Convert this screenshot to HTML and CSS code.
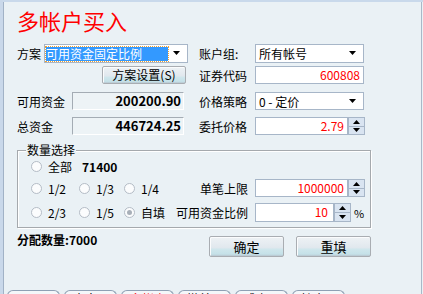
FILE: index.html
```html
<!DOCTYPE html>
<html lang="zh-CN">
<head>
<meta charset="utf-8">
<title>多帐户买入</title>
<link rel="stylesheet" href="styles.css">
</head>
<body>
<div class="win">
  <div class="panel">
    <h1 class="title">多帐户买入</h1>

    <div class="row r1">
      <div class="lcol">
        <span class="lbl l-plan">方案</span>
        <div class="combo c-plan">
          <span class="sel">可用资金固定比例</span>
          <svg class="arr" width="8" height="5" viewBox="0 0 8 5"><path d="M0 0h7l-3.5 4z" fill="#000"/></svg>
        </div>
      </div>
      <div class="rcol">
        <span class="lbl rlbl">账户组:</span>
        <div class="combo c-r">
          <span class="ctext">所有帐号</span>
          <svg class="arr" width="8" height="5" viewBox="0 0 8 5"><path d="M0 0h7l-3.5 4z" fill="#000"/></svg>
        </div>
      </div>
    </div>

    <div class="row r2">
      <div class="lcol">
        <button class="btn b-plan">方案设置(S)</button>
      </div>
      <div class="rcol">
        <span class="lbl rlbl">证券代码</span>
        <div class="inp w-full red">600808</div>
      </div>
    </div>

    <div class="row r3">
      <div class="lcol">
        <span class="lbl l-money">可用资金</span>
        <div class="ro">200200.90</div>
      </div>
      <div class="rcol">
        <span class="lbl rlbl">价格策略</span>
        <div class="combo c-r">
          <span class="ctext">0 - 定价</span>
          <svg class="arr" width="8" height="5" viewBox="0 0 8 5"><path d="M0 0h7l-3.5 4z" fill="#000"/></svg>
        </div>
      </div>
    </div>

    <div class="row r4">
      <div class="lcol">
        <span class="lbl l-money">总资金</span>
        <div class="ro">446724.25</div>
      </div>
      <div class="rcol">
        <span class="lbl rlbl">委托价格</span>
        <div class="inp w-spin red">2.79</div>
        <div class="spin">
          <i><svg width="7" height="4" viewBox="0 0 7 4"><path d="M3.5 0l3.5 4h-7z" fill="#000"/></svg></i>
          <i><svg width="7" height="4" viewBox="0 0 7 4"><path d="M0 0h7l-3.5 4z" fill="#000"/></svg></i>
        </div>
      </div>
    </div>

    <div class="group">
      <span class="legend">数量选择</span>
      <div class="grow ga">
        <div class="opts">
          <span class="opt"><span class="radio"></span>全部</span>
          <b class="all">71400</b>
        </div>
      </div>
      <div class="grow gb">
        <div class="opts">
          <span class="opt o1"><span class="radio"></span>1/2</span>
          <span class="opt o2"><span class="radio"></span>1/3</span>
          <span class="opt"><span class="radio"></span>1/4</span>
        </div>
        <span class="glbl">单笔上限</span>
        <div class="inp w-spin red">1000000</div>
        <div class="spin">
          <i><svg width="7" height="4" viewBox="0 0 7 4"><path d="M3.5 0l3.5 4h-7z" fill="#000"/></svg></i>
          <i><svg width="7" height="4" viewBox="0 0 7 4"><path d="M0 0h7l-3.5 4z" fill="#000"/></svg></i>
        </div>
      </div>
      <div class="grow gc">
        <div class="opts">
          <span class="opt o1"><span class="radio"></span>2/3</span>
          <span class="opt o2"><span class="radio"></span>1/5</span>
          <span class="opt"><span class="radio on"></span>自填</span>
        </div>
        <span class="glbl">可用资金比例</span>
        <div class="inp w-pct red">10</div>
        <div class="spin">
          <i><svg width="7" height="4" viewBox="0 0 7 4"><path d="M3.5 0l3.5 4h-7z" fill="#000"/></svg></i>
          <i><svg width="7" height="4" viewBox="0 0 7 4"><path d="M0 0h7l-3.5 4z" fill="#000"/></svg></i>
        </div>
        <span class="pct">%</span>
      </div>
    </div>

    <div class="foot">
      <b class="alloc">分配数量:7000</b>
      <div class="btns">
        <button class="btn b-act">确定</button>
        <button class="btn b-act">重填</button>
      </div>
    </div>

    <div class="tabs">
      <span class="tab">买入 F1</span>
      <span class="tab">卖出 F2</span>
      <span class="tab hot">多帐户 F3</span>
      <span class="tab">撤单 F4</span>
      <span class="tab">成交 F5</span>
      <span class="tab">持仓 F6</span>
    </div>
  </div>
</div>
</body>
</html>
```

FILE: styles.css
```css
html, body {
  margin: 0;
  padding: 0;
}
body {
  width: 423px;
  height: 294px;
  overflow: hidden;
  font-family: "Noto Sans CJK SC", "Liberation Sans", sans-serif;
  font-size: 12px;
  color: #000;
  background: #eaf1f5;
}
.win {
  height: 294px;
  box-sizing: border-box;
  border-top: 2px solid #c9d9eb;
  border-left: 3px solid #c9d8ea;
  background: #eaf1f5;
  display: flex;
}
.panel {
  flex: 1;
  border-left: 1px solid #a1b2c6;
  border-right: 1px solid #a9b8c8;
  margin-right: 1px;
  padding-left: 13px;
  display: flex;
  flex-direction: column;
  min-width: 0;
}
.title {
  margin: 5px 0 0;
  font-size: 22px;
  line-height: 26px;
  font-weight: normal;
  color: #ff0000;
}
.row {
  display: flex;
  height: 18px;
  align-items: center;
}
.r1 { margin-top: 11px; height: 19px; }
.r2 { margin-top: 3px; }
.r3 { margin-top: 8px; }
.r4 { margin-top: 7px; }
.lcol {
  width: 182px;
  height: 100%;
  display: flex;
  align-items: center;
}
.rcol {
  height: 100%;
  display: flex;
  align-items: center;
}
.lbl { white-space: nowrap; }
.l-plan { width: 27px; }
.l-money { width: 55px; }
.rlbl { width: 56px; }

.combo {
  box-sizing: border-box;
  height: 100%;
  background: #fff;
  border: 1px solid #a7b6c8;
  display: flex;
  align-items: center;
  position: relative;
}
.c-plan { width: 144px; }
.c-r { width: 109px; }
.sel {
  margin-left: 1px;
  width: 122px;
  height: 14px;
  line-height: 14px;
  background: #3399ff;
  color: #fff;
  outline: 1px dotted #f0a030;
  white-space: nowrap;
}
.ctext {
  padding-left: 3px;
  white-space: nowrap;
}
.arr {
  margin-left: auto;
  margin-right: 6px;
}

.btn {
  font-family: inherit;
  font-size: 12px;
  color: #000;
  box-sizing: border-box;
  border: 1px solid #a9adb2;
  border-radius: 2px;
  padding: 0;
  background: linear-gradient(#eef2f5 0%, #e1e8ee 55%, #cfe6ec 65%, #c5e1e8 90%, #b9c6d0 100%);
  box-shadow: inset 1px 1px 0 #fbfcfd;
}
.b-plan {
  margin-left: 85px;
  width: 84px;
  height: 18px;
  line-height: 16px;
}

.inp {
  box-sizing: border-box;
  height: 100%;
  background: #fff;
  border: 1px solid #a7b6c8;
  text-align: right;
  padding-right: 3px;
  line-height: 16px;
  white-space: nowrap;
}
.w-full { width: 109px; }
.w-spin { width: 93px; }
.w-pct { width: 79px; padding-right: 5px; }
.red { color: #ff0000; }

.ro {
  box-sizing: border-box;
  width: 112px;
  height: 100%;
  border: 1px solid;
  border-color: #a4acb4 #ffffff #ffffff #a4acb4;
  background: #edf3f6;
  text-align: right;
  padding-right: 2px;
  font-weight: bold;
  font-size: 13px;
  line-height: 16px;
}

.spin {
  width: 17px;
  height: 100%;
  display: flex;
  flex-direction: column;
}
.spin i {
  flex: 1;
  box-sizing: border-box;
  border: 1px solid #a7b6c8;
  background: #d9e4f1;
  display: flex;
  align-items: center;
  justify-content: center;
}
.spin i + i { border-top: none; }

.group {
  position: relative;
  margin-top: 15px;
  width: 354px;
  height: 78px;
  box-sizing: border-box;
  border: 1px solid #a5a9ad;
  box-shadow: 1px 1px 0 #ffffff, inset 1px 1px 0 #ffffff;
  padding: 6px 0 0 13px;
}
.legend {
  position: absolute;
  top: -9px;
  left: 8px;
  padding: 0 1px;
  background: #eaf1f5;
  line-height: 16px;
}
.grow {
  display: flex;
  align-items: center;
  height: 18px;
}
.gb { margin-top: 4px; }
.gc { margin-top: 6px; height: 19px; }
.gb .inp, .gc .inp, .gb .spin, .gc .spin { height: 100%; }
.opts {
  width: 145px;
  display: flex;
  align-items: center;
}
.opt {
  display: flex;
  align-items: center;
  white-space: nowrap;
}
.o1 { width: 48px; }
.o2 { width: 45px; }
.radio {
  width: 11px;
  height: 11px;
  box-sizing: border-box;
  border: 1px solid #b4bcc6;
  border-radius: 50%;
  background: #fbfcfd;
  margin-right: 6px;
  position: relative;
}
.radio.on::after {
  content: "";
  position: absolute;
  left: 2px;
  top: 2px;
  width: 5px;
  height: 5px;
  border-radius: 50%;
  background: #a8afb8;
}
.all {
  margin-left: 10px;
  font-weight: bold;
}
.glbl {
  width: 72px;
  text-align: right;
  margin-right: 7px;
  white-space: nowrap;
}
.pct {
  margin-left: 3px;
  font-size: 11px;
}

.foot {
  display: flex;
  align-items: flex-start;
  margin-top: 4px;
}
.alloc {
  line-height: 16px;
  font-weight: bold;
}
.btns {
  margin-left: auto;
  margin-right: 50px;
  margin-top: 4px;
  display: flex;
  gap: 12px;
}
.b-act {
  width: 75px;
  height: 21px;
  line-height: 19px;
  font-size: 13px;
}

.tabs {
  margin-top: auto;
  margin-left: -10px;
  height: 4px;
  display: flex;
  gap: 4px;
}
.tab {
  flex: none;
  width: 53px;
  height: 20px;
  box-sizing: border-box;
  border: 1px solid #8fa0b4;
  border-bottom: none;
  border-radius: 6px 6px 0 0;
  background: #f4f7fa;
  padding: 1px 0 0 8px;
  line-height: 14px;
  white-space: nowrap;
  overflow: hidden;
}
.tab.hot { color: #ff0000; }
```
